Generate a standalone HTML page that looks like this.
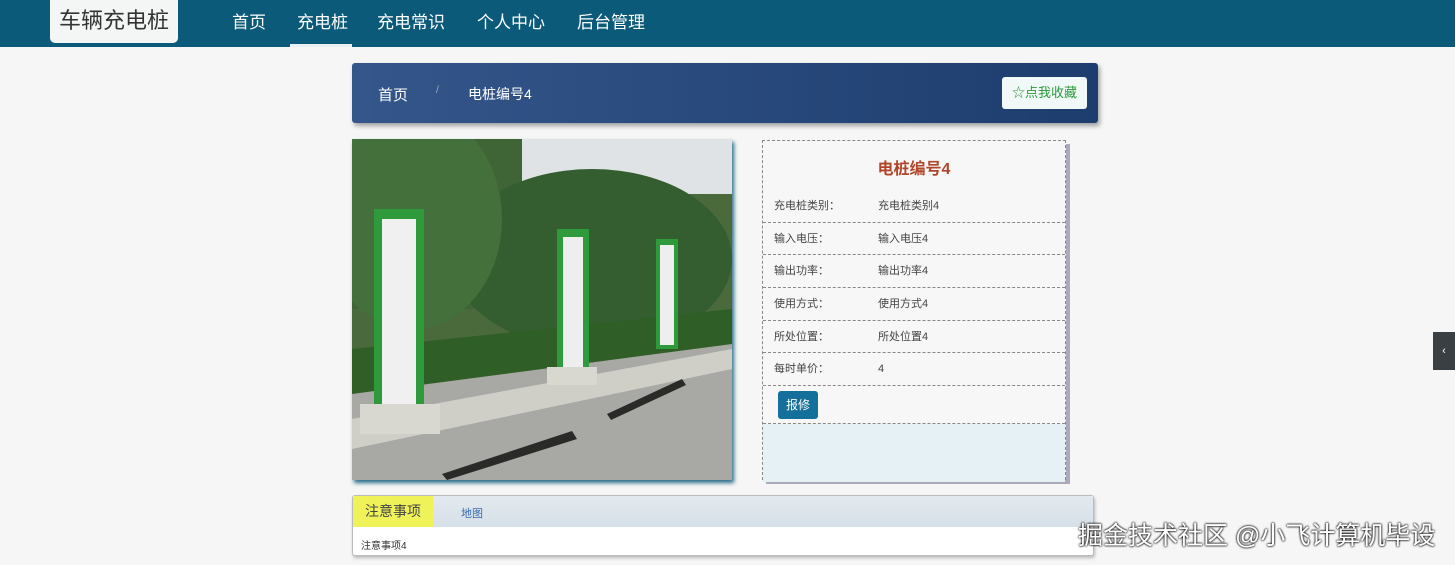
<!DOCTYPE html>
<html><head><meta charset="utf-8"><style>
*{margin:0;padding:0;box-sizing:border-box}
body{width:1455px;height:565px;overflow:hidden;background:#f6f6f6;font-family:"Liberation Sans","Noto Sans CJK SC",sans-serif;position:relative}
.nav{position:absolute;left:0;top:0;width:1455px;height:47px;background:#0b5a7a}
.logo{position:absolute;left:50px;top:0;width:128px;height:43px;background:#f4f6f6;border-radius:0 0 5px 5px;font-size:22px;color:#333;text-align:center;line-height:42px}
.nav a{position:absolute;top:8px;color:#fff;font-size:17px;text-decoration:none}
.ul{position:absolute;left:290px;top:44px;width:62px;height:3px;background:#e8f0f2}
.bc{position:absolute;left:352px;top:63px;width:746px;height:60px;background:linear-gradient(90deg,#34568a,#1d3d6e);border-radius:3px;box-shadow:2px 3px 5px rgba(0,0,0,.35);color:#fff;font-size:15px}
.fav{position:absolute;left:650px;top:14px;width:85px;height:32px;background:#f1f8f8;border-radius:3px;color:#2a9a3a;font-size:13px;line-height:32px;text-align:center}
.img{position:absolute;left:352px;top:139px;width:380px;height:341px;box-shadow:2px 3px 4px #2a6d8a;overflow:hidden}
.card{position:absolute;left:762px;top:140px;width:304px;height:340px;border:1px dashed #888;background:#f7f7f7;box-shadow:4px 4px 0 #aab}
.card h3{text-align:center;color:#b0452a;font-size:16px;padding-top:14px;height:49px}
.row{height:32.7px;border-bottom:1px dashed #888;font-size:11px;color:#444;line-height:32px;position:relative}
.row span{position:absolute;left:11px}.row b{font-weight:normal;position:absolute;left:115px}
.btn{position:absolute;left:15px;top:5px;width:40px;height:28px;background:#14709a;color:#fff;border-radius:3px;font-size:12px;line-height:28px;text-align:center}
.tabs{position:absolute;left:352px;top:495px;width:742px;height:61px;border:1px solid #bbb;border-radius:3px;background:#fff;box-shadow:1px 2px 3px rgba(0,0,0,.25)}
.th{height:31px;background:linear-gradient(#e3e9ee,#d6e0e8)}
.wm{position:absolute;left:1078px;top:516px;font-size:25px;color:#fff;text-shadow:0 0 2px #000,0 0 2px #000;white-space:nowrap}
</style></head><body>
<div class="nav"><div class="logo">车辆充电桩</div>
<a style="left:232px">首页</a><a style="left:297px">充电桩</a><a style="left:377px">充电常识</a><a style="left:477px">个人中心</a><a style="left:577px">后台管理</a><div class="ul"></div></div>
<div class="bc"><span style="position:absolute;left:26px;top:21px">首页</span><span style="position:absolute;left:84px;top:22px;font-size:10px;color:#aab">/</span><span style="position:absolute;left:116px;top:21px;font-size:14px">电桩编号4</span><div class="fav">☆点我收藏</div></div>
<div class="img"><svg width="380" height="341">
<rect width="380" height="341" fill="#4a6a3c"/>
<rect x="140" y="0" width="240" height="55" fill="#dfe3e6"/>
<rect x="0" y="0" width="170" height="170" fill="#3f6436"/>
<ellipse cx="240" cy="120" rx="140" ry="90" fill="#355e30"/>
<ellipse cx="60" cy="80" rx="90" ry="110" fill="#44703c"/>
<polygon points="0,250 380,200 380,341 0,341" fill="#a8a8a4"/>
<polygon points="0,280 380,210 380,230 0,310" fill="#cfcfc8"/>
<polygon points="0,210 380,170 380,205 0,255" fill="#2f5e26"/>
<rect x="22" y="70" width="50" height="200" fill="#2e9a3c"/><rect x="30" y="80" width="34" height="185" fill="#f0f0f0"/>
<rect x="8" y="265" width="80" height="30" fill="#d8d8d0"/>
<rect x="205" y="90" width="32" height="140" fill="#2e9a3c"/><rect x="211" y="98" width="20" height="130" fill="#eee"/>
<rect x="195" y="228" width="50" height="18" fill="#d8d8d0"/>
<rect x="304" y="100" width="22" height="110" fill="#2e9a3c"/><rect x="308" y="106" width="14" height="100" fill="#eee"/>
<polygon points="90,335 220,292 225,300 95,341" fill="#2a2a28"/>
<polygon points="255,275 330,240 334,246 259,281" fill="#2a2a28"/>
</svg></div>
<div class="card"><h3>电桩编号4</h3>
<div class="row"><span>充电桩类别：</span><b>充电桩类别4</b></div>
<div class="row"><span>输入电压：</span><b>输入电压4</b></div>
<div class="row"><span>输出功率：</span><b>输出功率4</b></div>
<div class="row"><span>使用方式：</span><b>使用方式4</b></div>
<div class="row"><span>所处位置：</span><b>所处位置4</b></div>
<div class="row"><span>每时单价：</span><b>4</b></div>
<div class="row" style="height:38px"><div class="btn">报修</div></div>
<div style="height:58px;background:#e6f1f6"></div>
</div>
<div class="tabs"><div class="th"><span style="display:inline-block;width:80px;height:31px;background:#f0f25a;color:#444;font-size:14px;line-height:31px;text-align:center">注意事项</span><span style="position:absolute;left:108px;top:9px;font-size:11px;color:#3a6ab0">地图</span></div>
<div style="font-size:10px;color:#333;padding:10px 8px">注意事项4</div></div>
<div style="position:absolute;left:1433px;top:332px;width:22px;height:38px;background:#3a3f44;color:#fff;font-size:11px;line-height:38px;text-align:center">‹</div>
<div class="wm">掘金技术社区 @小飞计算机毕设</div>
</body></html>
